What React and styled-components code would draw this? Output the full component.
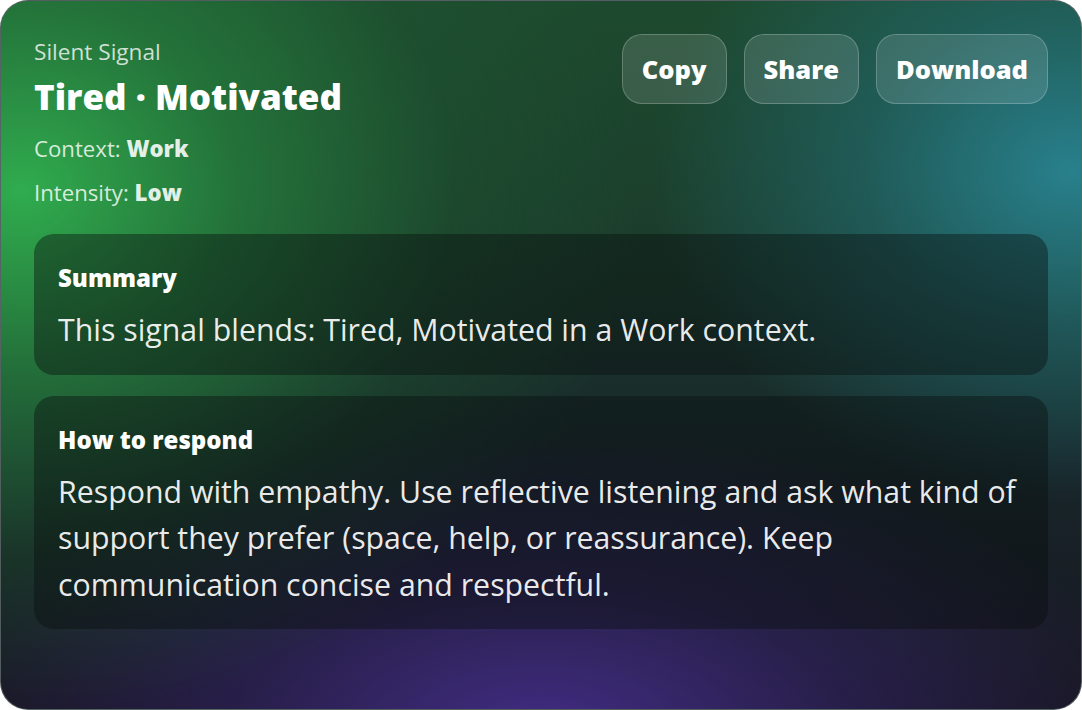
import React from "react";
import styled, { createGlobalStyle } from "styled-components";

const Global = createGlobalStyle`
  html, body { margin: 0; padding: 0; background: #ffffff; }
  body { font-family: "Open Sans", "Noto Sans", sans-serif; }
  * { box-sizing: border-box; }
`;

const Card = styled.div`
  width: 1082px;
  height: 710px;
  border-radius: 28px;
  border: 1px solid rgba(90, 100, 100, 0.9);
  overflow: hidden;
  padding: 33px 33px 0 33px;
  color: #ffffff;
  background:
    radial-gradient(ellipse 620px 520px at 20px 190px, rgba(48, 172, 78, 1) 0%, rgba(38, 130, 62, 0.75) 35%, rgba(30, 90, 48, 0.35) 70%, rgba(30, 90, 48, 0) 100%),
    radial-gradient(ellipse 420px 330px at 1070px 170px, rgba(40, 128, 140, 1) 0%, rgba(35, 110, 120, 0.55) 50%, rgba(35, 110, 120, 0) 100%),
    radial-gradient(ellipse 620px 300px at 540px 730px, rgba(66, 44, 132, 1) 0%, rgba(50, 36, 100, 0.6) 50%, rgba(40, 30, 80, 0) 100%),
    linear-gradient(180deg, #1d4a2e 0%, #1b3d2c 35%, #18262a 65%, #17161f 100%);
`;

const Header = styled.div`
  display: flex;
  justify-content: space-between;
  align-items: flex-start;
`;

const Meta = styled.div`
  display: flex;
  flex-direction: column;
  padding-top: 6px;
`;

const Eyebrow = styled.div`
  font-size: 22.6px;
  line-height: 24px;
  color: rgba(255, 255, 255, 0.78);
`;

const Title = styled.h1`
  margin: 11px 0 0;
  font-size: 35px;
  line-height: 44px;
  font-weight: 800;
  color: #ffffff;
`;

const MetaLine = styled.div`
  margin-top: 16px;
  font-size: 22.2px;
  line-height: 28px;
  color: rgba(255, 255, 255, 0.82);
  b { font-weight: 800; color: rgba(255, 255, 255, 0.88); }
`;

const Actions = styled.div`
  display: flex;
  gap: 17px;
`;

const Button = styled.button`
  height: 70px;
  padding: 0 19px;
  border-radius: 20px;
  border: 1px solid rgba(255, 255, 255, 0.22);
  background: rgba(255, 255, 255, 0.13);
  color: #ffffff;
  font-family: inherit;
  font-size: 25.5px;
  font-weight: 800;
  cursor: pointer;
`;

const Panels = styled.div`
  display: flex;
  flex-direction: column;
  gap: 21px;
  margin-top: 27px;
`;

const Panel = styled.section`
  border-radius: 20px;
  background: rgba(10, 14, 14, 0.42);
  padding: 30px 24px 21px;
`;

const PanelTitle = styled.h2`
  margin: 0;
  font-size: 24px;
  line-height: 28px;
  font-weight: 800;
  color: #ffffff;
`;

const PanelBody = styled.p`
  margin: 15px 0 0;
  font-size: 30.3px;
  line-height: 46.5px;
  color: rgba(255, 255, 255, 0.92);
`;

export default function App() {
  return (
    <>
      <Global />
      <Card>
        <Header>
          <Meta>
            <Eyebrow>Silent Signal</Eyebrow>
            <Title>Tired · Motivated</Title>
            <MetaLine>
              Context: <b>Work</b>
            </MetaLine>
            <MetaLine>
              Intensity: <b>Low</b>
            </MetaLine>
          </Meta>
          <Actions>
            <Button>Copy</Button>
            <Button>Share</Button>
            <Button>Download</Button>
          </Actions>
        </Header>
        <Panels>
          <Panel>
            <PanelTitle>Summary</PanelTitle>
            <PanelBody>This signal blends: Tired, Motivated in a Work context.</PanelBody>
          </Panel>
          <Panel>
            <PanelTitle>How to respond</PanelTitle>
            <PanelBody>
              Respond with empathy. Use reflective listening and ask what kind of support they prefer (space, help, or
              reassurance). Keep communication concise and respectful.
            </PanelBody>
          </Panel>
        </Panels>
      </Card>
    </>
  );
}
